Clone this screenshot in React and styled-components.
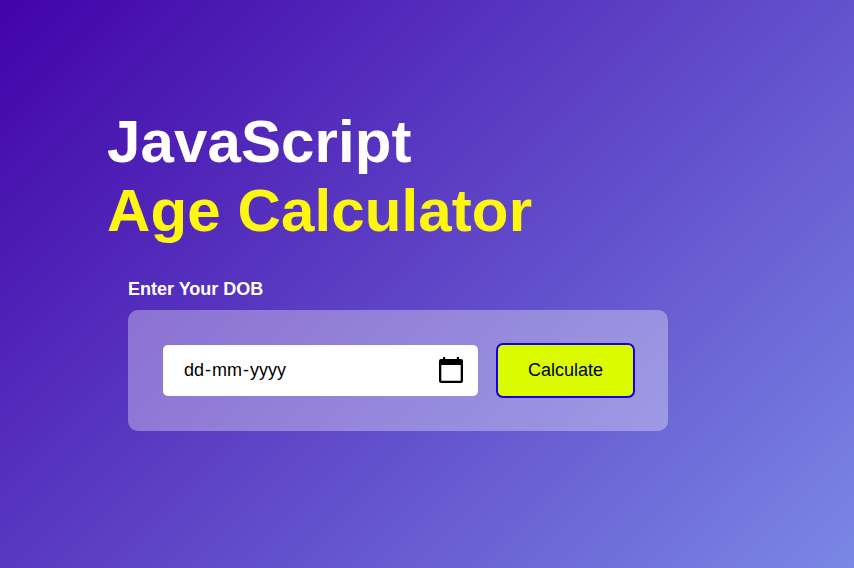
import React from "react";
import styled, { createGlobalStyle } from "styled-components";

const GlobalStyle = createGlobalStyle`
  * { box-sizing: border-box; }
  html, body { margin: 0; padding: 0; overflow: hidden; }
  body { font-family: "Liberation Sans", Arial, sans-serif; }
`;

const Page = styled.main`
  width: 100%;
  height: 568px;
  padding: 107px 0 0 107px;
  background: linear-gradient(135deg, #4203a9, #90bafc) 0 0 / 1366px 598px no-repeat;
`;

const Title = styled.h1`
  margin: 0;
  font-size: 60px;
  font-weight: 700;
  line-height: 69px;
  letter-spacing: 0.12px;
  color: #fff;
`;

const Accent = styled.span`
  display: block;
  color: #fff60f;
`;

const Calculator = styled.form`
  width: 540px;
  margin: 34px 0 0 21px;
`;

const Label = styled.label`
  display: block;
  height: 31px;
  font-size: 18px;
  font-weight: 700;
  line-height: 20px;
  color: #fff;
`;

const Card = styled.div`
  display: flex;
  align-items: center;
  justify-content: space-between;
  height: 121px;
  padding: 0 33px 0 35px;
  border-radius: 10px;
  background: rgba(255, 255, 255, 0.33);
`;

const DateField = styled.div`
  display: flex;
  align-items: center;
  justify-content: space-between;
  width: 315px;
  height: 51px;
  padding: 0 14px 0 21px;
  border-radius: 5px;
  background: #fff;
  color: #000;
  font-size: 18px;
`;

const DateParts = styled.span`
  display: flex;
`;

const Part = styled.span`
  padding: 0 1px 0 0;
`;

const CalendarIcon = styled.svg`
  display: block;
  width: 26px;
  height: 28px;
  margin-bottom: 2px;
`;

const Button = styled.button`
  width: 139px;
  height: 55px;
  padding: 0;
  border: 2px solid #1200e6;
  border-radius: 7px;
  background: #dbfb00;
  color: #000;
  font-family: inherit;
  font-size: 18px;
`;

export default function App() {
  return (
    <>
      <GlobalStyle />
      <Page>
        <Title>
          JavaScript
          <Accent>Age Calculator</Accent>
        </Title>
        <Calculator>
          <Label>Enter Your DOB</Label>
          <Card>
            <DateField>
              <DateParts>
                <Part>dd</Part>
                <Part>-</Part>
                <Part>mm</Part>
                <Part>-</Part>
                <Part>yyyy</Part>
              </DateParts>
              <CalendarIcon viewBox="0 0 26 28" aria-hidden="true">
                <path
                  fillRule="evenodd"
                  d="M5 1h2.2v2h11.6V1H21v2h2a2 2 0 0 1 2 2v20a2 2 0 0 1-2 2H3a2 2 0 0 1-2-2V5a2 2 0 0 1 2-2h2zM3.3 9v15.7h19.4V9z"
                />
              </CalendarIcon>
            </DateField>
            <Button type="button">Calculate</Button>
          </Card>
        </Calculator>
      </Page>
    </>
  );
}
